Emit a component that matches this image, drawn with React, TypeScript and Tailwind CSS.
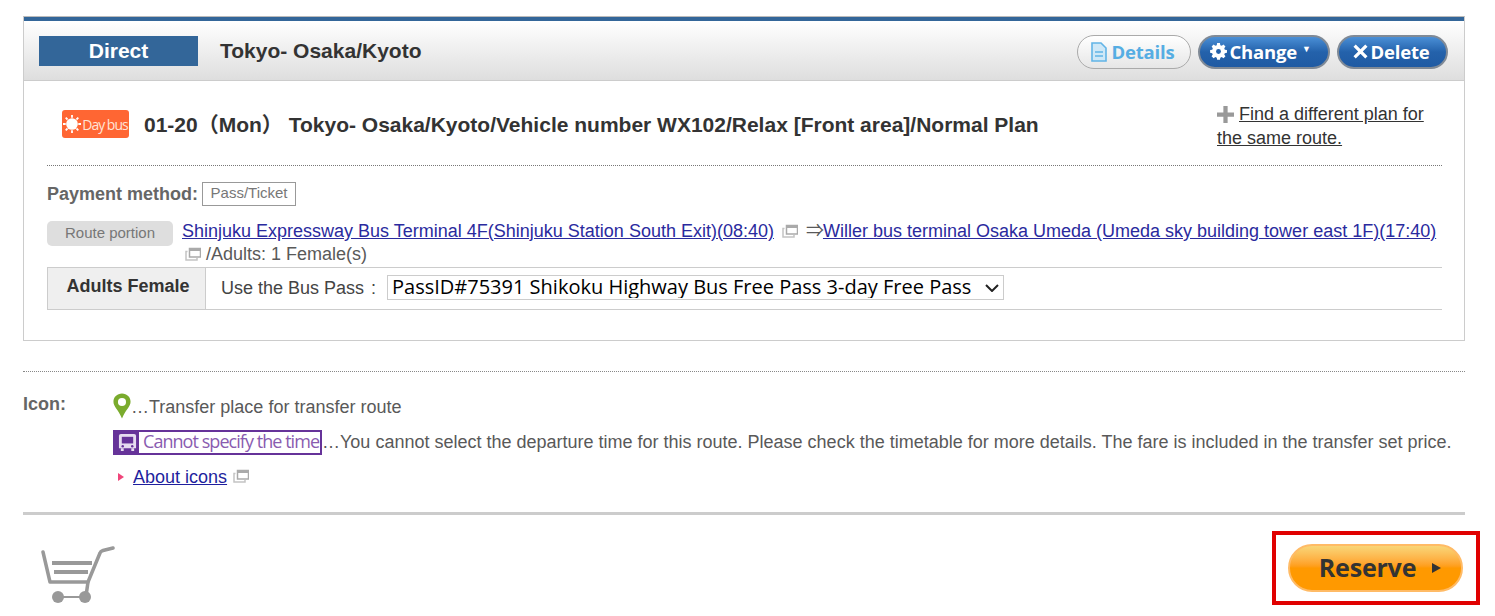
import React from "react";

const ExternalIcon: React.FC<{ className?: string }> = ({ className }) => (
  <svg viewBox="0 0 16 14" className={`inline-block w-[16px] h-[14px] ${className ?? ""}`}>
    <path d="M2.500 4.500h-1.500v8.500h11v-2" fill="none" stroke="#c4c4c4" strokeWidth="1.500" />
    <path d="M4.500 1.500h11v8.500h-11z" fill="#fff" stroke="#aaa" strokeWidth="1.500" />
    <path d="M4.500 1h11v3h-11z" fill="#aaa" />
  </svg>
);

const PillButton: React.FC<{ children: React.ReactNode; className: string }> = ({ children, className }) => (
  <button type="button" className={`h-[34px] rounded-full flex items-center justify-center font-bold text-[18.5px] font-['Open_Sans',sans-serif] tracking-[-0.2px] ${className}`}>
    {children}
  </button>
);

const App: React.FC = () => {
  return (
    <div className="w-[1495px] h-[616px] overflow-hidden bg-white pl-[23px] pr-[30px] pt-[16px] font-['Liberation_Sans','Noto_Sans_CJK_JP',Arial,sans-serif] text-[#595959] text-[18px]">
      <section className="h-[325px] border border-[#ccc] border-t-[#bbb]">
        <div className="border-t-[4px] border-[#336699] h-[64px] border-b border-b-[#ccc] bg-gradient-to-b from-white to-[#dedede] flex items-center pl-[15px] pr-[16px]">
          <div className="w-[159px] h-[30px] bg-[#336699] text-white font-bold text-[21px] flex items-center justify-center">Direct</div>
          <h2 className="ml-[22px] font-bold text-[21px] text-[#333]">Tokyo- Osaka/Kyoto</h2>
          <div className="ml-auto mt-[2px] flex items-center gap-[7px]">
            <PillButton className="w-[114px] border border-[#aaa] bg-gradient-to-b from-white to-[#e6e6e6] text-[#55ade3] gap-[5px] pr-[3px]">
              <svg viewBox="0 0 16 20" className="w-[16px] h-[20px]">
                <path d="M1 1h9l5 5v13H1z" fill="#cfe8f7" stroke="#62b4e6" strokeWidth="1.600" />
                <path d="M4 10h8M4 14h8" stroke="#62b4e6" strokeWidth="1.600" />
              </svg>
              Details
            </PillButton>
            <PillButton className="w-[132px] border-2 border-[#808a96] bg-gradient-to-b from-[#4a8fd6] via-[#2462ab] to-[#1f5aa3] text-white gap-[2px] pr-[7px]">
              <svg viewBox="0 0 16 16" className="w-[17px] h-[17px]">
                <path d="M6.500 0h3l.4 2.300 1.500.6L13.300 1.600l2.100 2.100-1.300 1.900.6 1.500 2.300.4v3l-2.300.4-.6 1.500 1.300 1.900-2.100 2.100-1.900-1.300-1.500.6-.4 2.300h-3l-.4-2.300-1.500-.6-1.900 1.300L.5 14.300l1.300-1.900-.6-1.500L-1 10.500v-3l2.300-.4.6-1.500L.6 3.700l2.100-2.100 1.900 1.300 1.500-.6z" fill="#fff" transform="translate(1 0) scale(.88)" />
                <circle cx="8" cy="8" r="2.300" fill="#2462ab" />
              </svg>
              Change
              <span className="text-[9px] ml-[3px] -mt-[6px]">▼</span>
            </PillButton>
            <PillButton className="w-[111px] border-2 border-[#808a96] bg-gradient-to-b from-[#4a8fd6] via-[#2462ab] to-[#1f5aa3] text-white gap-[3px] pr-[3px]">
              <svg viewBox="0 0 14 14" className="w-[15px] h-[15px]">
                <path d="M1.500 1.500l11 11M12.500 1.500l-11 11" stroke="#fff" strokeWidth="3" />
              </svg>
              Delete
            </PillButton>
          </div>
        </div>

        <div className="pl-[23px] pr-[22px]">
          <div className="h-[85px] border-b border-dotted border-[#777] flex items-start pl-[15px] pt-[21px]">
            <div className="mt-[8px] w-[67px] h-[28px] rounded-[3px] bg-[#ff6633] text-[#ffe3d6] text-[14px] flex items-center justify-center gap-[1px] font-['Open_Sans',sans-serif] tracking-[-1px]">
              <svg viewBox="0 0 20 20" className="w-[18px] h-[18px]">
                <circle cx="10" cy="10" r="6.500" fill="#fff" />
                <path d="M10 0v3M10 17v3M0 10h3M17 10h3M3 3l2 2M15 15l2 2M17 3l-2 2M5 15l-2 2" stroke="#fff" strokeWidth="2" />
              </svg>
              Day bus
            </div>
            <h3 className="ml-[15px] mt-[11px] font-bold text-[21px] leading-[24px] text-[#333] whitespace-nowrap">
              01-20（Mon） Tokyo- Osaka/Kyoto/Vehicle number WX102/Relax [Front area]/Normal Plan
            </h3>
            <p className="ml-auto mr-[1px] w-[224px] text-[18px] leading-[24px] text-[#333]">
              <svg viewBox="0 0 16 16" className="inline-block w-[17px] h-[17px] mr-[5px] align-[-3px]">
                <path d="M6 0h4v6h6v4h-6v6H6v-6H0V6h6z" fill="#999" />
              </svg>
              <a href="#" className="underline">Find a different plan for the same route.</a>
            </p>
          </div>

          <div className="mt-[16px] flex items-center h-[24px]">
            <span className="font-bold text-[#666]">Payment method:</span>
            <span className="ml-[4px] -mt-[1px] h-[24px] w-[94px] border border-[#999] text-[#777] text-[15px] flex items-center justify-center pb-[1px]">Pass/Ticket</span>
          </div>

          <div className="mt-[14px] flex items-start">
            <span className="mt-[1px] shrink-0 w-[126px] h-[25px] rounded-[5px] bg-[#dedede] text-[#777] text-[15px] flex items-center justify-center">Route portion</span>
            <p className="ml-[9px] text-[18px] leading-[23px] whitespace-nowrap">
              <a href="#" className="underline text-[#2a2a9e]">Shinjuku Expressway Bus Terminal 4F(Shinjuku Station South Exit)(08:40)</a>
              <ExternalIcon className="mx-[8px] align-[-1px]" />
              <span className="inline-block w-[17px]">⇒</span>
              <a href="#" className="underline text-[#2a2a9e]">Willer bus terminal Osaka Umeda (Umeda sky building tower east 1F)(17:40)</a>
              <br />
              <ExternalIcon className="ml-[3px] mr-[5px] align-[-1px]" />
              /Adults: 1 Female(s)
            </p>
          </div>

          <div className="mt-[1px] h-[43px] border-y border-[#ccc] flex">
            <div className="w-[159px] border-x border-[#ccc] bg-[#efefef] font-bold text-[#333] flex items-start justify-center pt-[5px] pl-[3px]">Adults Female</div>
            <div className="flex items-center pl-[15px] text-[#444]">
              <span className="w-[166px] -mt-[1px] flex gap-[7px]">
                <span>Use the Bus Pass</span>
                <span>:</span>
              </span>
              <div className="relative -mt-[2px]">
                <select className="appearance-none block w-[617px] h-[25px] border border-[#ccc] bg-white text-black text-[20px] leading-[22px] pt-0 pb-[1px] pl-[4px] font-['Open_Sans',sans-serif]">
                  <option>PassID#75391 Shikoku Highway Bus Free Pass 3-day Free Pass</option>
                </select>
                <svg viewBox="0 0 14 8" className="absolute right-[5px] top-[9px] w-[14px] h-[8px] pointer-events-none">
                  <path d="M1 1l6 6 6-6" fill="none" stroke="#222" strokeWidth="2" />
                </svg>
              </div>
            </div>
          </div>
        </div>
      </section>

      <section className="mt-[30px] border-t border-dotted border-[#888] h-[141px] flex pt-[22px]">
        <span className="font-bold w-[90px] text-[#666] leading-[24px] -mt-[2px]">Icon:</span>
        <div className="flex flex-col">
          <div className="flex items-center h-[26px]">
            <svg viewBox="0 0 20 28" className="w-[18px] h-[28px] -mt-[2px]">
              <path d="M10 0c5.500 0 9.500 4 9.500 9.200 0 5.500-5 8-9.500 18.800C5.500 17.200.5 14.700.5 9.200.5 4 4.500 0 10 0z" fill="#7aab2d" />
              <circle cx="10" cy="9.500" r="4.500" fill="#fff" />
            </svg>
            <span>…Transfer place for transfer route</span>
          </div>
          <div className="flex items-center mt-[8px] whitespace-nowrap">
            <span className="flex items-center h-[25px] w-[209px] border-2 border-[#663399] bg-white overflow-hidden">
              <span className="w-[24px] h-[25px] bg-[#663399] flex items-center justify-center shrink-0">
                <svg viewBox="0 0 20 20" className="w-[19px] h-[19px]">
                  <path d="M3 1h14a2 2 0 012 2v13H1V3a2 2 0 012-2z" fill="#e6dcf0" />
                  <path d="M4 4h12v7H4z" fill="#663399" />
                  <circle cx="5" cy="14" r="1.300" fill="#663399" />
                  <circle cx="15" cy="14" r="1.300" fill="#663399" />
                  <path d="M3 16h3v3H3zM14 16h3v3h-3z" fill="#e6dcf0" />
                </svg>
              </span>
              <span className="pl-[4px] -mt-[2px] text-[#8a5cb0] text-[18px] font-['Open_Sans',sans-serif] tracking-[-0.95px] leading-[20px]">Cannot specify the time</span>
            </span>
            <span className="mt-[1px]">…You cannot select the departure time for this route. Please check the timetable for more details. The fare is included in the transfer set price.</span>
          </div>
          <div className="mt-[9px] flex items-center pl-[5px] h-[24px]">
            <span className="w-0 h-0 border-y-[4px] border-y-transparent border-l-[6px] border-l-[#f0457a] mr-[9px]" />
            <a href="#" className="underline text-[#1f1f9e]">About icons</a>
            <ExternalIcon className="ml-[6px] -mt-[2px]" />
          </div>
        </div>
      </section>

      <div className="border-t-[3px] border-[#ccc] flex justify-between items-start">
        <svg viewBox="0 0 76 60" className="ml-[17px] mt-[31px] w-[76px] h-[60px]">
          <path d="M3 6l7 30h38L60 7c.5-1.500 1.500-2 3-2.500L73 2" fill="none" stroke="#999" strokeWidth="3.500" strokeLinecap="round" strokeLinejoin="round" />
          <path d="M12 17h40M14 26h34" stroke="#999" strokeWidth="4" />
          <circle cx="18" cy="51" r="6" fill="#999" />
          <circle cx="45" cy="51" r="6" fill="#999" />
          <path d="M18 51h27" stroke="#999" strokeWidth="2" />
          <path d="M46 50l2-14" stroke="#999" strokeWidth="3.500" />
        </svg>
        <div className="-mr-[15px] mt-[16px] w-[208px] h-[74px] border-[4px] border-[#e00000] flex items-center justify-center pr-[2px]">
          <button type="button" className="w-[175px] h-[48px] rounded-full border-2 border-[#ffbb66] bg-gradient-to-b from-[#f8d677] via-[#ff9900] to-[#ff9900] text-[#333] font-bold text-[25px] font-['Open_Sans',sans-serif] tracking-[-0.2px] flex items-center justify-center gap-[16px] pl-[10px]">
            Reserve
            <span className="w-0 h-0 border-y-[5px] border-y-transparent border-l-[9px] border-l-[#333]" />
          </button>
        </div>
      </div>
    </div>
  );
};

export default App;
